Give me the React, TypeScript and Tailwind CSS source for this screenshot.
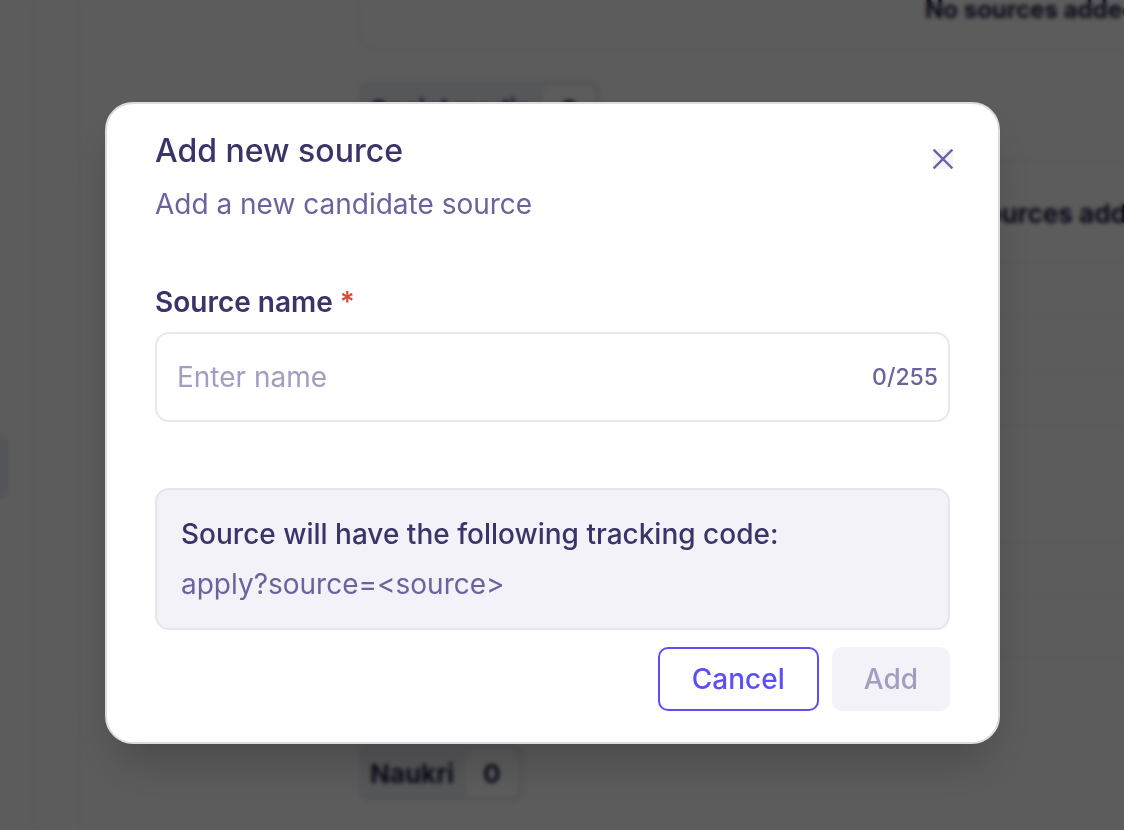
import React, { useState } from "react";

const SourceBadge = ({ label, count }: { label: string; count: number }) => {
    return (
        <div className="inline-flex items-center gap-[12px] rounded-xl bg-[#eef0f5] py-[6px] pl-[12px] pr-[6px]">
            <span className="text-[26px] font-bold text-[#221d48]">{label}</span>
            <span className="rounded-lg bg-white px-[17px] py-[4px] text-[26px] font-bold text-[#221d48]">{count}</span>
        </div>
    );
};

const Page = () => {
    return (
        <div className="flex h-screen overflow-hidden bg-white">
            <div className="w-[33px] shrink-0 border-r border-[#ececf2]">
                <div className="mt-[435px] h-[64px] w-[10px] rounded-r-2xl bg-[#eceef5]"></div>
            </div>
            <div className="w-[47px] shrink-0 border-r border-[#f1f1f5]"></div>
            <div className="flex min-w-0 flex-1 flex-col pl-[278px]">
                <div className="-mt-[8px] flex h-[58px] w-[900px] shrink-0 rounded-b-2xl border border-t-0 border-[#e5e4ee] pl-[566px]">
                    <span className="whitespace-nowrap text-[24px] font-bold text-[#221d48]">No sources added</span>
                </div>
                <div className="mt-[30px] flex">
                    <SourceBadge label="Social media" count={0} />
                </div>
                <div className="mt-[22px] flex w-[900px] flex-col rounded-2xl border border-[#e5e4ee]">
                    <div className="h-[100px] border-b border-[#e5e4ee] pl-[570px] pt-[32px]">
                        <span className="whitespace-nowrap text-[26px] font-bold text-[#221d48]">No sources added</span>
                    </div>
                    <div className="h-[55px] border-b border-[#e5e4ee]"></div>
                    <div className="h-[55px] border-b border-[#e5e4ee]"></div>
                    <div className="h-[55px] border-b border-[#e5e4ee]"></div>
                    <div className="h-[115px] border-b border-[#e5e4ee]"></div>
                    <div className="h-[55px] border-b border-[#e5e4ee]"></div>
                    <div className="h-[60px]"></div>
                </div>
                <div className="mt-[86px] flex">
                    <SourceBadge label="Naukri" count={0} />
                </div>
            </div>
        </div>
    );
};

const AddSourceModal = () => {
    const [name, setName] = useState("");
    return (
        <div className="flex w-[895px] flex-col rounded-[28px] border-2 border-[#dcdce0] bg-white px-[48px] pb-[31px] pt-[27px] shadow-2xl">
            <div className="flex items-start justify-between">
                <div className="flex flex-col">
                    <h2 className="text-[32px] font-medium leading-[40px] text-[#3a3468]">Add new source</h2>
                    <p className="mt-[17px] text-[28px] leading-[32px] text-[#6c639e]">Add a new candidate source</p>
                </div>
                <button className="-mr-[3px] mt-[18px] flex h-[20px] w-[20px] items-center justify-center bg-[#f3f3f8]">
                    <svg width="20" height="20" viewBox="0 0 20 20" fill="none" stroke="#6c639e" strokeWidth="2.4" strokeLinecap="square">
                        <path d="M1.5 1.5 L18.5 18.5 M18.5 1.5 L1.5 18.5" />
                    </svg>
                </button>
            </div>

            <label className="mt-[66px] text-[28px] font-semibold leading-[32px] text-[#3a3468]">
                Source name <span className="text-[#d94a3d]">*</span>
            </label>
            <div className="mt-[14px] flex h-[90px] items-center rounded-[14px] border-2 border-[#e9e8f1] pl-[20px] pr-[10px]">
                <input
                    value={name}
                    onChange={(e: any) => setName(e.target.value)}
                    placeholder="Enter name"
                    className="min-w-0 flex-1 bg-transparent text-[28px] text-[#3a3468] outline-none placeholder:text-[#a29ec0]"
                />
                <span className="text-[23px] font-medium text-[#6c639e]">{name.length}/255</span>
            </div>

            <div className="mt-[66px] flex flex-col gap-[18px] rounded-[14px] border-2 border-[#e7e6ef] bg-[#f2f2f8] px-[24px] py-[28px]">
                <p className="text-[28px] font-medium leading-[32px] text-[#3a3468]">Source will have the following tracking code:</p>
                <p className="text-[28px] leading-[32px] text-[#6c639e]">apply?source=&lt;source&gt;</p>
            </div>

            <div className="mt-[17px] flex justify-end gap-[13px]">
                <button className="h-[64px] rounded-[10px] border-2 border-[#5b4ff5] px-[32px] text-[28px] font-medium text-[#5b4ff5]">
                    Cancel
                </button>
                <button className="h-[64px] rounded-[10px] bg-[#f2f2f8] px-[32px] text-[28px] font-medium text-[#a29ec2]">
                    Add
                </button>
            </div>
        </div>
    );
};

const App = () => {
    return (
        <div className="relative h-screen w-full overflow-hidden font-['Inter',sans-serif]">
            <Page />
            <div className="fixed inset-0 bg-black/64 backdrop-blur-[2px]">
                <div className="pl-[105px] pt-[102px]">
                    <AddSourceModal />
                </div>
            </div>
        </div>
    );
};

export default App;
